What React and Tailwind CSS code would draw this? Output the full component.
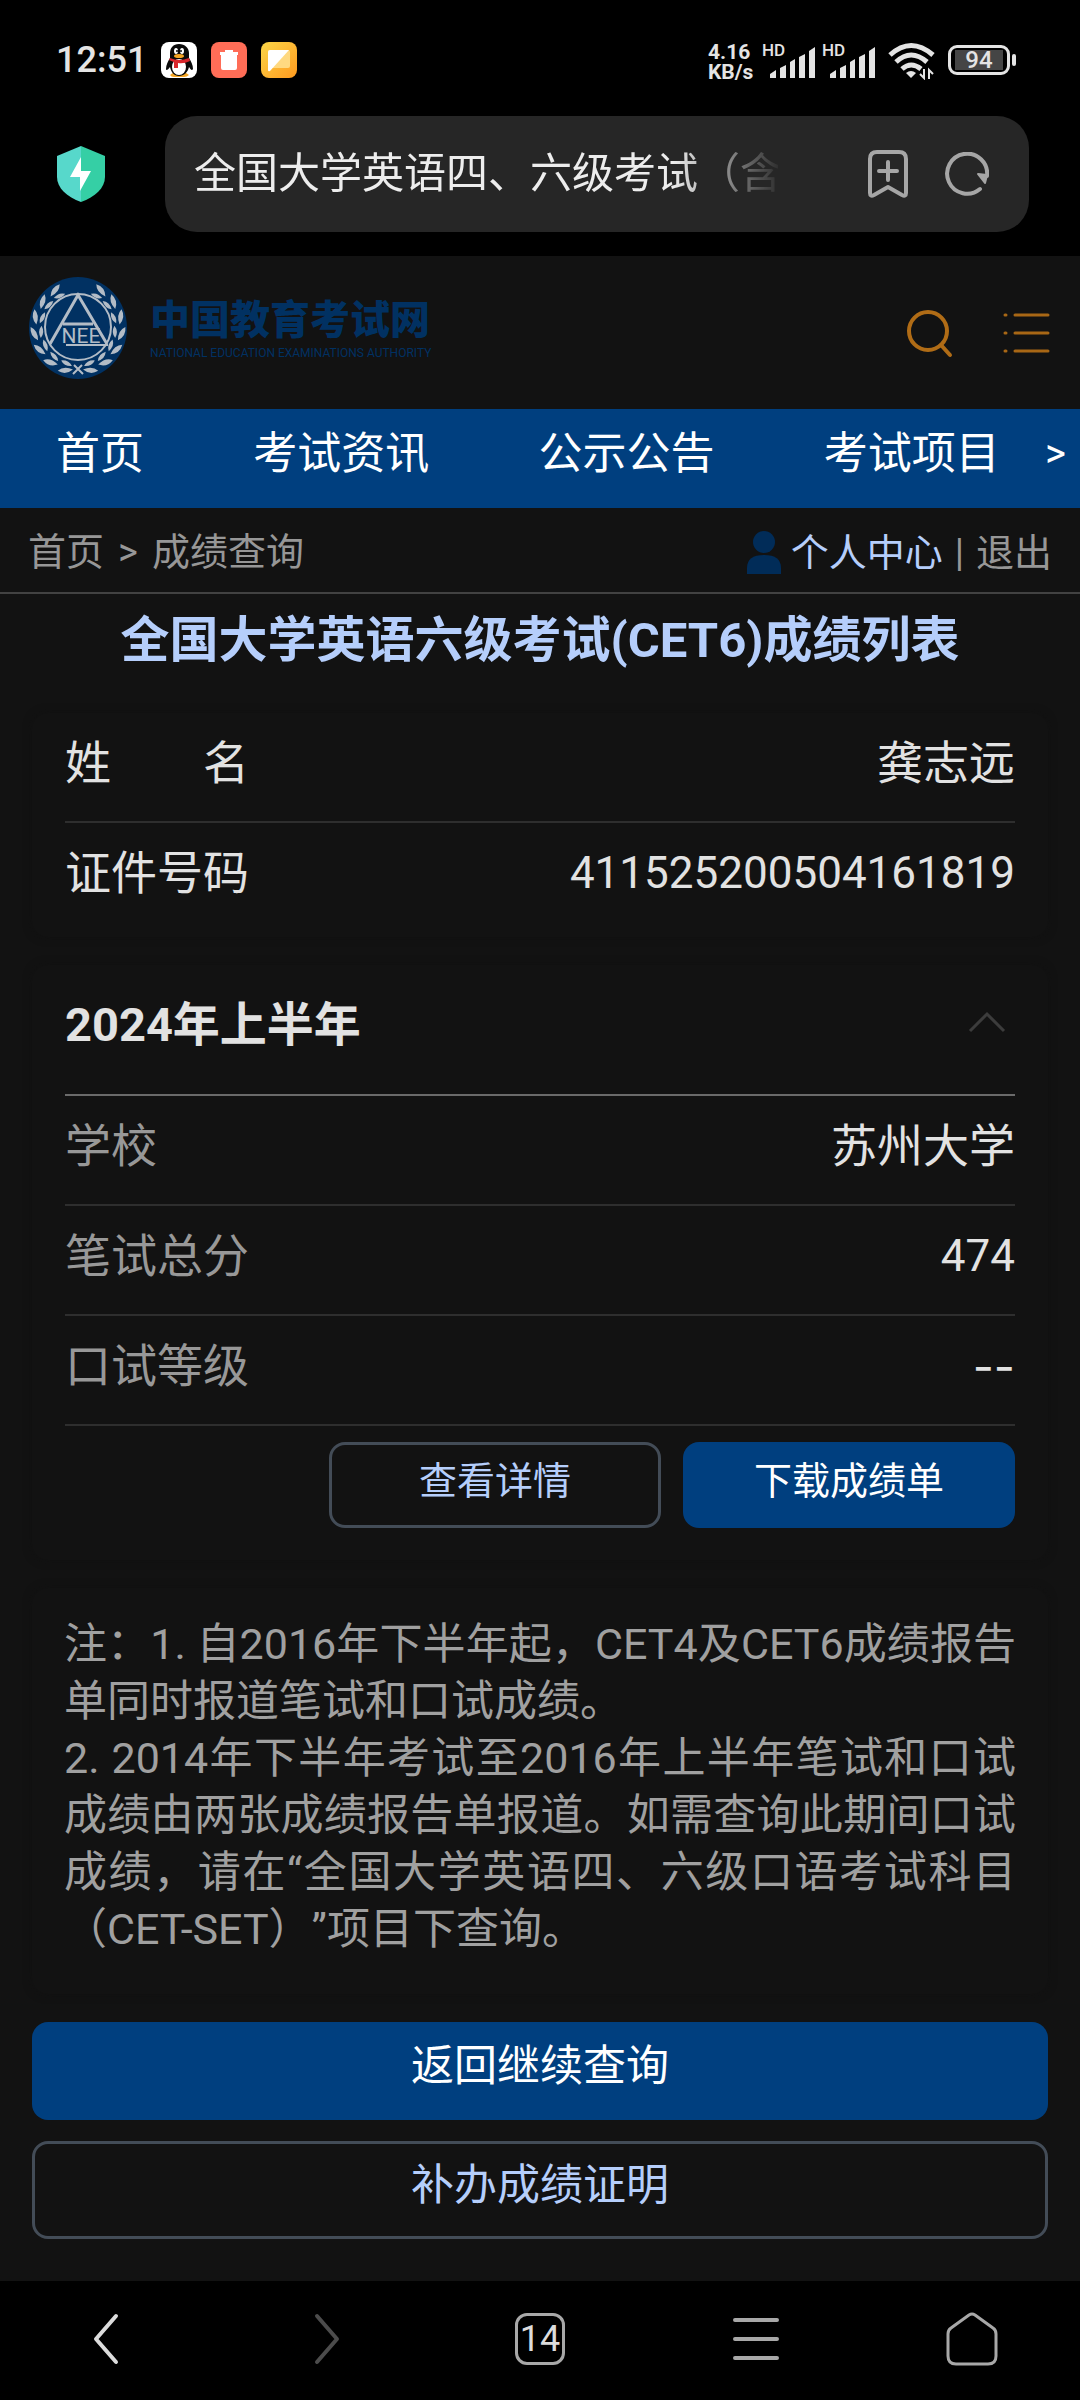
import React, { useState } from "react";

const navItems = ["首页", "考试资讯", "公示公告", "考试项目"];

const profile = [
  { label: "姓　　名", value: "龚志远", valueClass: "text-[46px]" },
  { label: "证件号码", value: "411525200504161819", valueClass: "text-[44px]" },
];

const scores = [
  { label: "学校", value: "苏州大学", valueClass: "text-[46px]" },
  { label: "笔试总分", value: "474", valueClass: "text-[44px]" },
  { label: "口试等级", value: "--", valueClass: "text-[46px] font-[Inter]" },
];

const leafAngles = [18, 40, 62, 84, 106, 128, 150];

const Signal = () => (
  <div className="flex items-start">
    <span className="w-6 text-[17px] leading-[17px] font-medium">HD</span>
    <svg className="-ml-4 mt-1" width="46" height="32" viewBox="0 0 46 32" fill="#e4e4e4">
      <path d="M0 32v-4l6-4v8zM10 32V22l6-3v13zM20 32V16l5-3v19zM29 32v-21l6-3v24zM39 32V5l6-4v31z" />
    </svg>
  </div>
);

const StatusBar = () => (
  <div className="flex h-[116px] items-start justify-between pt-[42px] pr-16 pl-14 text-[#e4e4e4]">
    <div className="flex items-center gap-[14px]">
      <span className="text-[36px] leading-9 font-medium">12:51</span>
      <svg width="36" height="36" viewBox="0 0 36 36">
        <rect width="36" height="36" rx="8" fill="#fff" />
        <path d="M9 33q4-4 9-1q6-3 10 1q-2 2-5 2H13q-3 0-4-2z" fill="#f5a623" />
        <path d="M18 2c-6 0-9 4-9 9v5c-2 3-4 7-4 11c0 2 2 1 4-2c1 5 4 9 9 9s9-4 10-9c2 3 3 4 4 2c0-4-2-8-4-11v-5c0-5-4-9-10-9z" fill="#0a0a0a" />
        <ellipse cx="18" cy="25" rx="7" ry="8" fill="#fff" />
        <ellipse cx="15" cy="9" rx="2" ry="3" fill="#fff" />
        <ellipse cx="21" cy="9" rx="2" ry="3" fill="#fff" />
        <circle cx="16" cy="9" r="1" fill="#0a0a0a" />
        <circle cx="20" cy="9" r="1" fill="#0a0a0a" />
        <ellipse cx="18" cy="14" rx="5" ry="2" fill="#f5a623" />
        <path d="M9 16q9 4 19 0l1 3q-6 3-12 2v5h-4v-6q-3-1-5-2z" fill="#d8262c" />
      </svg>
      <svg width="36" height="36" viewBox="0 0 36 36">
        <rect width="36" height="36" rx="8" fill="#ff6d57" />
        <path d="M14 8h8v2h5v3h-1v13q0 2-2 2H12q-2 0-2-2V13H9v-3h5z" fill="#fff" />
      </svg>
      <svg width="36" height="36" viewBox="0 0 36 36">
        <defs>
          <linearGradient id="note" x1="0" y1="0" x2="1" y2="1">
            <stop offset="0" stopColor="#fbd648" />
            <stop offset="1" stopColor="#ff9a1f" />
          </linearGradient>
        </defs>
        <rect width="36" height="36" rx="8" fill="url(#note)" />
        <rect x="7" y="8" width="22" height="18" rx="2" fill="#ffd980" />
        <path d="M7 10q0-2 2-2h19L9 29q-2 1-2-1z" fill="#fff" />
      </svg>
    </div>

    <div className="flex items-start">
      <div className="mr-1 w-[50px] text-[21px] leading-5 font-bold">
        <p>4.16</p>
        <p>KB/s</p>
      </div>
      <div className="flex gap-1.5">
        <Signal />
        <Signal />
      </div>
      <svg className="ml-3" width="48" height="38" viewBox="0 0 48 38" fill="none" stroke="#e4e4e4" strokeWidth="5">
        <path d="M2 13q21-19 43 0M8 20q15-14 31 0M14 27q9-8 19 0" />
        <path d="M18 31q5-4 10 0l-5 5z" fill="#e4e4e4" stroke="none" />
        <path d="M36 27v9l-4-4M41 37v-9l4 4" strokeWidth="2" />
      </svg>
      <div className="mt-[3px] ml-3 flex items-center gap-[2px]">
        <div className="flex h-[30px] w-[62px] items-center justify-center rounded-[9px] border-[3px] border-[#e4e4e4] px-1 py-0.5">
          <span className="h-5 w-full bg-[#454545] text-center text-[24px] leading-5 font-medium">94</span>
        </div>
        <span className="h-3 w-1 rounded-full bg-[#e4e4e4]" />
      </div>
    </div>
  </div>
);

const AddressBar = () => (
  <div className="flex items-center pr-[51px] pb-6 pl-14">
    <svg width="50" height="58" viewBox="0 0 50 58">
      <path d="M25 1L1 11v21c0 11 10 20 24 25z" fill="#57d8cb" />
      <path d="M25 1l24 10v21c0 11-10 20-24 25z" fill="#35cfa5" />
      <path d="M25 12L14 32h10v14l11-20H25z" fill="#fff" />
    </svg>
    <div className="ml-[59px] flex h-[116px] flex-1 items-center rounded-[32px] bg-[#262626] pr-10 pl-[29px]">
      <input
        aria-label="地址栏"
        readOnly
        value="全国大学英语四、六级考试（含口试）"
        className="w-[584px] bg-transparent pb-0.5 text-[42px] text-[#ededed] outline-none [mask-image:linear-gradient(to_right,#000_82%,transparent_101%)]"
      />
      <button aria-label="添加书签" className="mr-9 ml-auto">
        <svg width="42" height="48" viewBox="0 0 42 48" fill="none" stroke="#a6a6a6" strokeWidth="4" strokeLinejoin="round" strokeLinecap="round">
          <path d="M3 43V9q0-7 7-7h22q7 0 7 7v34q0 4-4 2l-14-8l-14 8q-4 2-4-2zM12 21h18M21 12v18" />
        </svg>
      </button>
      <button aria-label="刷新">
        <svg width="44" height="44" viewBox="0 0 44 44" fill="none" stroke="#a6a6a6" strokeWidth="4" strokeLinecap="round">
          <path d="M35 37A20 20 0 1 1 42 24" />
          <path d="M33 22l9 1l-2 8z" fill="#a6a6a6" strokeWidth="2" strokeLinejoin="round" />
        </svg>
      </button>
    </div>
  </div>
);

const Emblem = () => (
  <svg width="100" height="104" viewBox="0 0 100 104">
    <ellipse cx="50" cy="51" rx="49" ry="51" fill="#013162" />
    <g fill="#b3bcc6">
      {leafAngles.map((a) => (
        <g key={a}>
          <path transform={`rotate(${180 + a} 50 51)`} d="M42 10q5-8 14-6q-4 7-14 6zM44 13q7-3 12 2q-7 3-12-2z" />
          <path transform={`rotate(${180 - a} 50 51)`} d="M58 10q-5-8-14-6q4 7 14 6zM56 13q-7-3-12 2q7 3 12-2z" />
        </g>
      ))}
    </g>
    <g fill="none" stroke="#b3bcc6" strokeWidth="2">
      <circle cx="50" cy="50" r="33" />
      <path d="M22 67L50 18l29 49M35 47h30" strokeWidth="3" />
      <path d="M38 68h42M45 97l9-9M55 97l-9-9" />
    </g>
    <text x="53" y="66" textAnchor="middle" fontSize="21" fill="#b3bcc6">NEE</text>
  </svg>
);

const SiteHeader = () => (
  <header className="flex h-[153px] items-center bg-[#121212] pr-[30px] pl-7">
    <a href="#" className="flex items-center gap-[22px] pb-2 text-[#013162]">
      <Emblem />
      <div className="pt-1">
        <p className="text-[40px] leading-[40px] font-black">中国教育考试网</p>
        <p className="mt-1 text-[12px] leading-4">NATIONAL EDUCATION EXAMINATIONS AUTHORITY</p>
      </div>
    </a>
    <button aria-label="搜索" className="ml-auto">
      <svg width="48" height="50" viewBox="0 0 48 50" fill="none" stroke="#b06c16" strokeWidth="4" strokeLinecap="round">
        <circle cx="22" cy="23" r="19" />
        <path d="M35 37l9 10" />
      </svg>
    </button>
    <button aria-label="菜单" className="ml-12">
      <svg width="48" height="42" viewBox="0 0 48 42" stroke="#a86715" strokeWidth="3" strokeLinecap="round">
        <path d="M3 3h1M3 21h1M3 39h1M13 3h33M13 21h33M13 39h33" />
      </svg>
    </button>
  </header>
);

const Row = ({ label, value, valueClass, muted }) => (
  <div className="flex h-[110px] items-center justify-between border-b-2 border-[#2e2e2e] pb-2 text-[46px] text-[#e2e2e2]">
    <dt className={muted ? "text-[#989898]" : ""}>{label}</dt>
    <dd className={valueClass}>{value}</dd>
  </div>
);

const BottomBar = () => (
  <footer className="grid h-[119px] grid-cols-5 place-items-center bg-black pb-1">
    <button aria-label="后退">
      <svg width="34" height="52" viewBox="0 0 34 52" fill="none" stroke="#dcdcdc" strokeWidth="4" strokeLinecap="round" strokeLinejoin="round">
        <path d="M25 3L5 26l20 23" />
      </svg>
    </button>
    <button aria-label="前进">
      <svg width="34" height="52" viewBox="0 0 34 52" fill="none" stroke="#4c4c4c" strokeWidth="4" strokeLinecap="round" strokeLinejoin="round">
        <path d="M10 3l20 23l-20 23" />
      </svg>
    </button>
    <button className="flex h-[52px] w-[50px] items-center justify-center rounded-[12px] border-[3px] border-[#a8a8a8] text-[36px] text-[#dcdcdc]">
      14
    </button>
    <button aria-label="菜单">
      <svg width="48" height="44" viewBox="0 0 48 44" stroke="#a8a8a8" strokeWidth="4" strokeLinecap="round">
        <path d="M3 3h42M3 22h42M3 41h42" />
      </svg>
    </button>
    <button aria-label="主页">
      <svg width="52" height="54" viewBox="0 0 52 54" fill="none" stroke="#a8a8a8" strokeWidth="3" strokeLinejoin="round">
        <path d="M2 22q0-4 3-6L23 3q3-2 6 0l18 13q3 2 3 6v22q0 8-8 8H10q-8 0-8-8z" />
      </svg>
    </button>
  </footer>
);

const App = () => {
  const [open, setOpen] = useState(true);

  return (
    <div className="flex min-h-screen flex-col bg-black font-[Roboto,'Noto_Sans_CJK_SC',sans-serif]">
      <StatusBar />
      <AddressBar />
      <SiteHeader />

      <nav className="flex h-[99px] items-center justify-between bg-[#003f7f] pr-[14px] pb-2.5 pl-14 text-[44px] text-white">
        {navItems.map((item) => (
          <a key={item} href="#">
            {item}
          </a>
        ))}
        <a href="#" aria-label="更多" className="-ml-16 text-[40px]">
          &gt;
        </a>
      </nav>

      <main className="flex-1 bg-[#121212]">
        {/* Breadcrumb */}
        <div className="flex h-[86px] items-center justify-between border-b-2 border-[#424242] px-7 pt-1 text-[38px] text-[#979797]">
          <p>
            <a href="#">首页</a>
            <span className="mx-3.5">&gt;</span>
            成绩查询
          </p>
          <div className="flex items-center pt-0.5">
            <svg className="mr-2.5" width="34" height="44" viewBox="0 0 34 44" fill="#012c58">
              <ellipse cx="17" cy="11" rx="11" ry="11" />
              <path d="M0 43V37q0-13 17-13t17 13v6z" />
            </svg>
            <a href="#" className="text-[#b5cefb]">个人中心</a>
            <span className="mx-3">|</span>
            <a href="#">退出</a>
          </div>
        </div>

        <h1 className="h-[119px] pt-[11px] text-center text-[49px] leading-[72px] font-bold text-[#b5cefb]">
          全国大学英语六级考试(CET6)成绩列表
        </h1>

        <div className="flex flex-col gap-7 px-8">
          <dl className="rounded-2xl px-[33px] pb-1 shadow-[0_0_8px_#111111] [&>div:last-child]:border-transparent">
            {profile.map((p) => (
              <Row key={p.label} {...p} />
            ))}
          </dl>

          <section className="rounded-2xl px-[33px] pb-8 shadow-[0_0_8px_#111111]">
            <button
              onClick={() => setOpen(!open)}
              className="flex h-[131px] w-full items-center justify-between border-b-2 border-[#6a6a6a] pr-2 pb-2 text-[47px] font-bold text-[#e2e2e2]"
            >
              2024年上半年
              <svg className="mb-2" width="40" height="24" viewBox="0 0 40 24" fill="none" stroke="#3c3c3c" strokeWidth="3">
                <path d="M3 21L20 4l17 17" />
              </svg>
            </button>
            {open && (
              <dl>
                {scores.map((s) => (
                  <Row key={s.label} {...s} muted />
                ))}
              </dl>
            )}
            <div className="mt-4 flex justify-end gap-[22px] text-[38px]">
              <button className="h-[86px] w-[332px] rounded-2xl border-[3px] border-[#434c57] pb-2 text-[#b5cefb]">
                查看详情
              </button>
              <button className="h-[86px] w-[332px] rounded-2xl bg-[#003f7f] pb-2 text-white">下载成绩单</button>
            </div>
          </section>

          <div className="rounded-2xl px-8 pt-7 pb-9 text-justify text-[43px] leading-[57px] text-[#a0a0a0] shadow-[0_0_8px_#111111] [text-spacing-trim:space-all]">
            <p>注：1. 自2016年下半年起，CET4及CET6成绩报告单同时报道笔试和口试成绩。</p>
            <p>
              2. 2014年下半年考试至2016年上半年笔试和口试成绩由两张成绩报告单报道。如需查询此期间口试成绩，请在“全国大学英语四、六级口语考试科目（CET-SET）”项目下查询。
            </p>
          </div>

          <div className="flex flex-col gap-[21px] text-[43px]">
            <button className="h-[98px] rounded-2xl bg-[#003f7f] pb-2.5 text-white">返回继续查询</button>
            <button className="h-[98px] rounded-2xl border-[3px] border-[#434c57] pb-2.5 text-[#b5cefb]">
              补办成绩证明
            </button>
          </div>
        </div>
      </main>

      <BottomBar />
    </div>
  );
};

export default App;
